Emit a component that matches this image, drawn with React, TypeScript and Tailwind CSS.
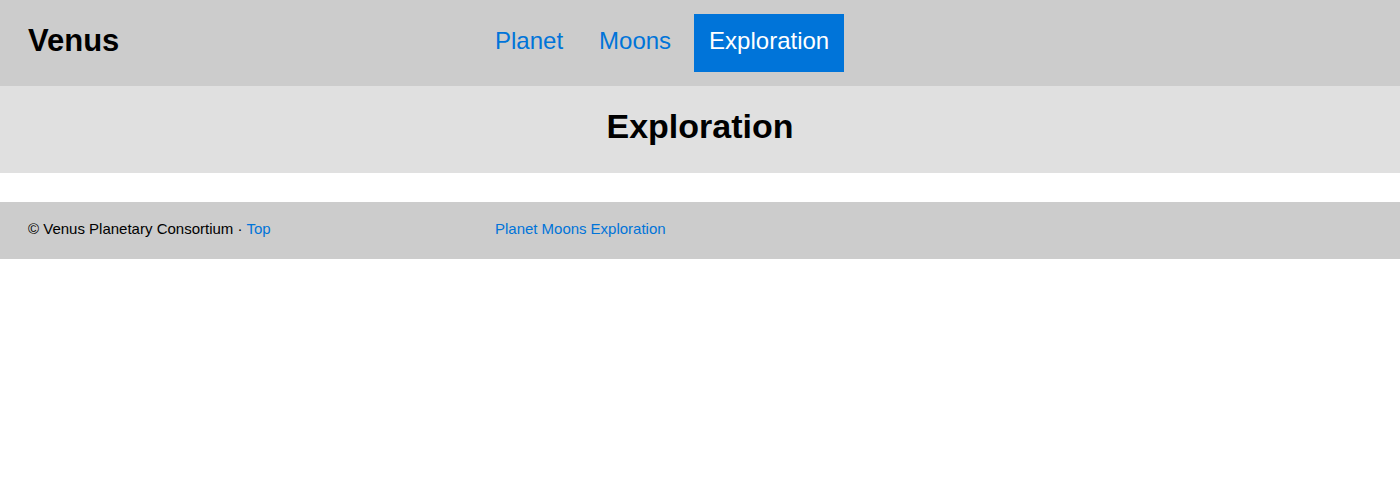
import React from 'react';

const links = ['Planet', 'Moons', 'Exploration'];

export default function App() {
  const active = 'Exploration';

  return (
    <div className="min-h-[500px] bg-white font-['Liberation_Sans',Arial,sans-serif] text-black">
      {/* Header */}
      <header className="flex h-[86px] items-center bg-[#cccccc]">
        <div className="w-[467px] shrink-0 pb-[6px] pl-[28px]">
          <h1 className="text-[31px] font-bold leading-none">Venus</h1>
        </div>
        <nav className="-ml-[15px] flex items-center gap-[6px] pl-[28px]">
          {links.map((link) => (
            <a
              key={link}
              href="#"
              className={
                link === active
                  ? 'ml-[2px] flex h-[58px] items-center bg-[#0074d9] px-[15px] pb-[4px] text-[24px] text-white'
                  : 'flex h-[58px] items-center px-[15px] pb-[4px] text-[24px] text-[#0074d9]'
              }
            >
              {link}
            </a>
          ))}
        </nav>
      </header>

      {/* Page title */}
      <div className="flex h-[87px] items-center justify-center bg-[#e0e0e0] pb-[8px]">
        <h2 className="text-[34px] font-bold leading-none">Exploration</h2>
      </div>

      {/* Footer */}
      <footer className="mt-[29px] flex h-[57px] items-center bg-[#cccccc] pb-[2px] text-[15px]">
        <div className="w-[467px] shrink-0 pl-[28px]">
          © Venus Planetary Consortium ·{' '}
          <a href="#" className="text-[#0074d9]">
            Top
          </a>
        </div>
        <div className="flex gap-[4px] pl-[28px]">
          {links.map((link) => (
            <a key={link} href="#" className="text-[#0074d9]">
              {link}
            </a>
          ))}
        </div>
      </footer>
    </div>
  );
}
